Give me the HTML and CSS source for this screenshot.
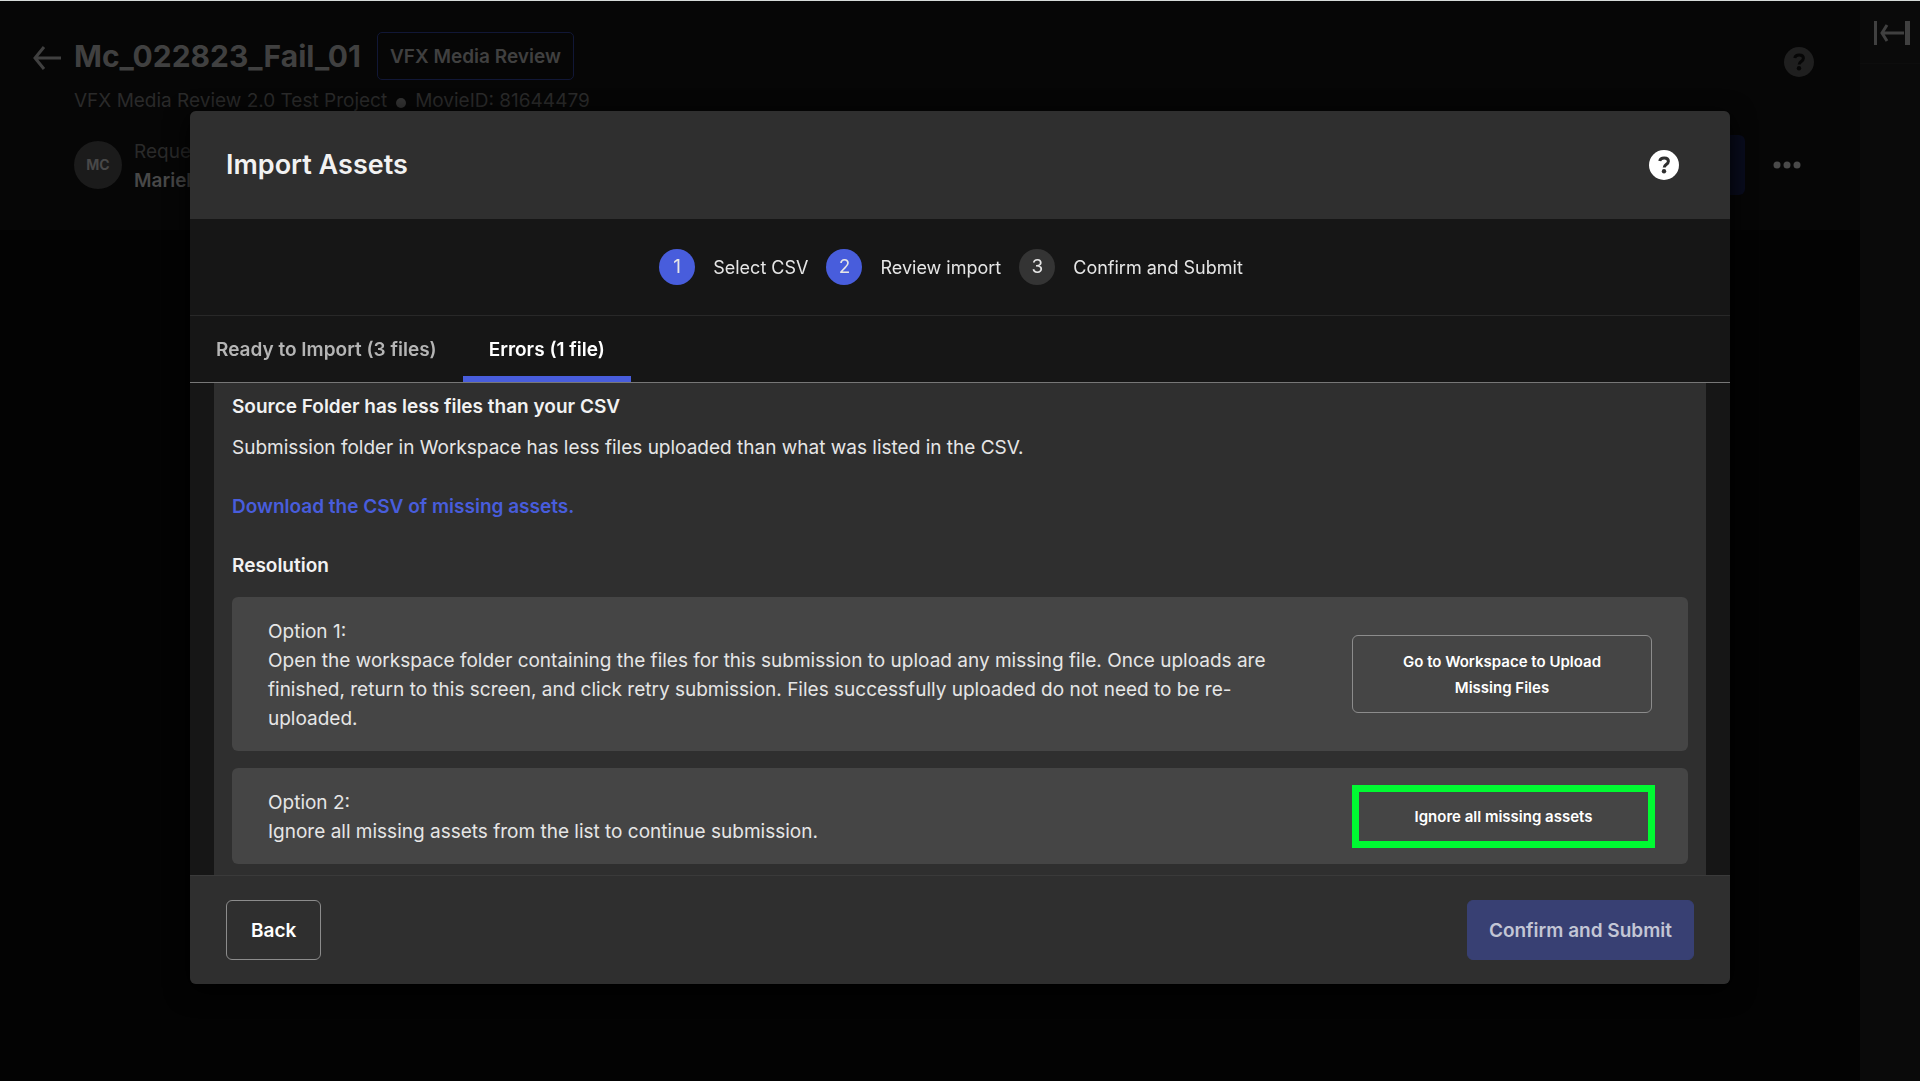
FILE: index.html
```html
<!DOCTYPE html>
<html lang="en">
<head>
<meta charset="utf-8">
<meta name="viewport" content="width=device-width, initial-scale=1">
<title>Import Assets</title>
<link rel="stylesheet" href="styles.css">
</head>
<body>
<div class="app">
  <main class="page">
    <header class="page-header">
      <div class="page-top">
        <a class="back-link" href="#" aria-label="Back to requests">
          <svg width="30" height="24" viewBox="0 0 30 24" fill="none" stroke="currentColor" stroke-width="3"><path d="M12 1 3 12l9 11M3 12h26"/></svg>
        </a>
        <div class="page-heading">
          <div class="title-row">
            <h1 class="page-title">Mc_022823_Fail_01</h1>
            <span class="badge">VFX Media Review</span>
          </div>
          <p class="page-meta"><span>VFX Media Review 2.0 Test Project</span><span class="meta-dot"></span><span>MovieID: 81644479</span></p>
        </div>
        <button class="help page-help" type="button" aria-label="Help">
          <svg width="30" height="30" viewBox="0 0 30 30"><circle cx="15" cy="15" r="15" fill="currentColor"/><path class="help-mark" d="M10.700 11C11.300 8.600 13 8 15.200 8c2.500 0 4.200 1.200 4.200 3.300 0 3.200-4.200 3.300-4.200 6.200"/><circle class="help-point" cx="15" cy="21.300" r="2.200"/></svg>
        </button>
      </div>
      <div class="page-bottom">
        <span class="avatar">MC</span>
        <dl class="requester"><dt>Request</dt><dd>Mariel</dd></dl>
        <button class="page-action" type="button" aria-label="Submit"></button>
        <button class="more" type="button" aria-label="More actions">
          <svg width="28" height="8" viewBox="0 0 28 8" fill="currentColor"><circle cx="4" cy="4" r="3.500"/><circle cx="14" cy="4" r="3.500"/><circle cx="24" cy="4" r="3.500"/></svg>
        </button>
      </div>
    </header>
  </main>
  <aside class="rail">
    <button class="rail-toggle" type="button" aria-label="Expand panel">
      <svg width="36" height="24" viewBox="0 0 36 24" fill="none" stroke="currentColor" stroke-width="3"><path d="M1.500 0v24M13 4 8 12l5 8M7 12h23"/><path d="M33.500 0v24" stroke-width="5"/></svg>
    </button>
  </aside>
</div>

<div class="overlay">
  <section class="modal" role="dialog" aria-modal="true" aria-labelledby="modal-title">
    <header class="modal-header">
      <h2 class="modal-title" id="modal-title">Import Assets</h2>
      <button class="help modal-help" type="button" aria-label="Import help">
        <svg width="30" height="30" viewBox="0 0 30 30"><circle cx="15" cy="15" r="15" fill="currentColor"/><path class="help-mark" d="M10.700 11C11.300 8.600 13 8 15.200 8c2.500 0 4.200 1.200 4.200 3.300 0 3.200-4.200 3.300-4.200 6.200"/><circle class="help-point" cx="15" cy="21.300" r="2.200"/></svg>
      </button>
    </header>
    <ol class="steps">
      <li class="step"><span class="step-number active">1</span>Select CSV</li>
      <li class="step"><span class="step-number active">2</span>Review import</li>
      <li class="step"><span class="step-number">3</span>Confirm and Submit</li>
    </ol>
    <div class="tabs" role="tablist">
      <button class="tab" type="button" role="tab" aria-selected="false">Ready to Import (3 files)</button>
      <button class="tab selected" type="button" role="tab" aria-selected="true">Errors (1 file)</button>
    </div>
    <div class="modal-body">
      <div class="panel" role="tabpanel">
        <h3 class="panel-title">Source Folder has less files than your CSV</h3>
        <p class="panel-text">Submission folder in Workspace has less files uploaded than what was listed in the CSV.</p>
        <a class="panel-link" href="#">Download the CSV of missing assets.</a>
        <h3 class="panel-title">Resolution</h3>
        <div class="options">
          <div class="option">
            <p class="option-text">Option 1:<br>Open the workspace folder containing the files for this submission to upload any missing file. Once uploads are finished, return to this screen, and click retry submission. Files successfully uploaded do not need to be re-uploaded.</p>
            <button class="option-button" type="button">Go to Workspace to Upload Missing Files</button>
          </div>
          <div class="option">
            <p class="option-text">Option 2:<br>Ignore all missing assets from the list to continue submission.</p>
            <button class="option-button highlighted" type="button">Ignore all missing assets</button>
          </div>
        </div>
      </div>
    </div>
    <footer class="modal-footer">
      <button class="button" type="button">Back</button>
      <button class="button primary" type="button" disabled>Confirm and Submit</button>
    </footer>
  </section>
</div>
</body>
</html>
```
FILE: styles.css
```css
* {
  box-sizing: border-box;
}

body {
  margin: 0;
  background: #030303;
  color: #e6e6e6;
  font-family: Inter, "Liberation Sans", sans-serif;
  font-size: 19px;
  line-height: 29px;
}

h1, h2, h3, p, dl, dd, ol {
  margin: 0;
  padding: 0;
}

button {
  margin: 0;
  padding: 0;
  border: 0;
  background: none;
  color: inherit;
  font: inherit;
}

svg {
  display: block;
}

.app {
  display: flex;
  min-height: 100vh;
  border-top: 1px solid #d5dad8;
}

.page {
  flex: 1;
}

.page-header {
  height: 229px;
  padding: 31px 46px 0 32px;
  background: #060606;
}

.page-top {
  display: flex;
  align-items: flex-start;
}

.back-link {
  margin: 14px 12px 0 0;
  color: #404040;
}

.page-heading {
  flex: 1;
}

.title-row {
  display: flex;
  align-items: center;
  gap: 16px;
}

.page-title {
  color: #404040;
  font-size: 30px;
  font-weight: 700;
  line-height: 48px;
}

.badge {
  padding: 10px 12px 8px;
  border: 1px solid #111736;
  border-radius: 5px;
  color: #404040;
  font-weight: 600;
  line-height: 28px;
}

.page-meta {
  display: flex;
  align-items: center;
  gap: 9px;
  margin-top: 6px;
  color: #2a2a2a;
}

.meta-dot {
  width: 10px;
  height: 10px;
  margin-top: 4px;
  border-radius: 50%;
  background: #333;
}

.help-mark {
  fill: none;
  stroke: var(--mark);
  stroke-width: 3;
}

.help-point {
  fill: var(--mark);
}

.page-help {
  --mark: #060606;
  margin-top: 15px;
  color: #1f1f1f;
}

.page-bottom {
  display: flex;
  align-items: center;
  gap: 12px;
  height: 60px;
  margin-top: 20px;
  padding-left: 42px;
}

.avatar {
  width: 48px;
  border-radius: 50%;
  background: #1b1b1b;
  color: #484848;
  font-size: 14px;
  font-weight: 700;
  line-height: 48px;
  text-align: center;
}

.requester {
  flex: 1;
  padding-top: 2px;
  color: #2a2a2a;
}

.requester dd {
  color: #484848;
  font-weight: 600;
}

.page-action {
  width: 180px;
  height: 60px;
  border-radius: 6px;
  background: #090c1e;
}

.more {
  margin: 0 13px 0 16px;
  color: #4a4a4a;
}

.rail {
  width: 60px;
  background: #0a0a0a;
}

.rail-toggle {
  display: block;
  width: 100%;
  padding: 20px 10px 18px 14px;
  border-bottom: 1px solid #0d0d0d;
  color: #404040;
}

.overlay {
  position: fixed;
  inset: 0;
  padding: 111px 190px 97px;
}

.modal {
  display: flex;
  flex-direction: column;
  height: 100%;
  overflow: hidden;
  border-radius: 6px;
  background: #161616;
  box-shadow: 0 6px 24px #000;
}

.modal-header {
  display: flex;
  align-items: center;
  justify-content: space-between;
  padding: 36px 51px 36px 36px;
  background: #2f2f2f;
}

.modal-title {
  color: #f2f2f2;
  font-size: 27px;
  font-weight: 600;
  line-height: 36px;
}

.modal-help {
  --mark: #2f2f2f;
  color: #fff;
}

.steps {
  display: flex;
  justify-content: center;
  padding: 30px 0;
  border-bottom: 1px solid #282828;
  list-style: none;
}

.step {
  display: flex;
  align-items: center;
  gap: 18px;
  margin-right: 18px;
  font-size: 18px;
}

.step-number {
  width: 36px;
  border-radius: 50%;
  background: #343434;
  font-size: 19px;
  line-height: 36px;
  text-align: center;
}

.step-number.active {
  background: #485ddc;
}

.tabs {
  display: flex;
  border-bottom: 1px solid #777;
}

.tab {
  padding: 19px 26px 12px;
  border-bottom: 6px solid transparent;
  color: #b5b5b5;
  font-weight: 600;
}

.tab.selected {
  border-color: #485ddc;
  color: #fff;
}

.modal-body {
  flex: 1;
  min-height: 0;
  overflow-y: auto;
  padding: 0 24px;
  scrollbar-width: none;
}

.panel {
  padding: 9px 18px 18px;
  background: #2f2f2f;
}

.panel-title {
  color: #f2f2f2;
  font-size: 19px;
  font-weight: 600;
}

.panel-text {
  margin-top: 12px;
}

.panel-link {
  display: block;
  margin: 30px 0;
  color: #485ddc;
  font-weight: 600;
  text-decoration: none;
}

.options {
  display: flex;
  flex-direction: column;
  gap: 17px;
  margin-top: 17px;
}

.option {
  display: flex;
  align-items: center;
  gap: 60px;
  padding: 0 36px;
  border-radius: 6px;
  background: #454545;
}

.option-text {
  flex: 1;
  padding: 20px 0 18px;
}

.option-button {
  width: 300px;
  padding: 13px 42px 11px;
  border: 1px solid #8c8c8c;
  border-radius: 6px;
  color: #fff;
  font-size: 15px;
  font-weight: 600;
  line-height: 26px;
}

.option-button.highlighted {
  width: 303px;
  margin-right: -3px;
  padding: 12px 35px 11px;
  border: 7px solid #00fa32;
  border-radius: 0;
}

.modal-footer {
  display: flex;
  justify-content: space-between;
  padding: 24px 36px;
  border-top: 1px solid #3a3a3a;
  background: #2f2f2f;
}

.button {
  padding: 2px 24px 0;
  border: 1px solid #8c8c8c;
  border-radius: 6px;
  color: #fff;
  font-weight: 600;
  line-height: 56px;
}

.button.primary {
  padding: 2px 21px 0;
  border-color: #384073;
  background: #384073;
  color: #c3c6d5;
}
```
